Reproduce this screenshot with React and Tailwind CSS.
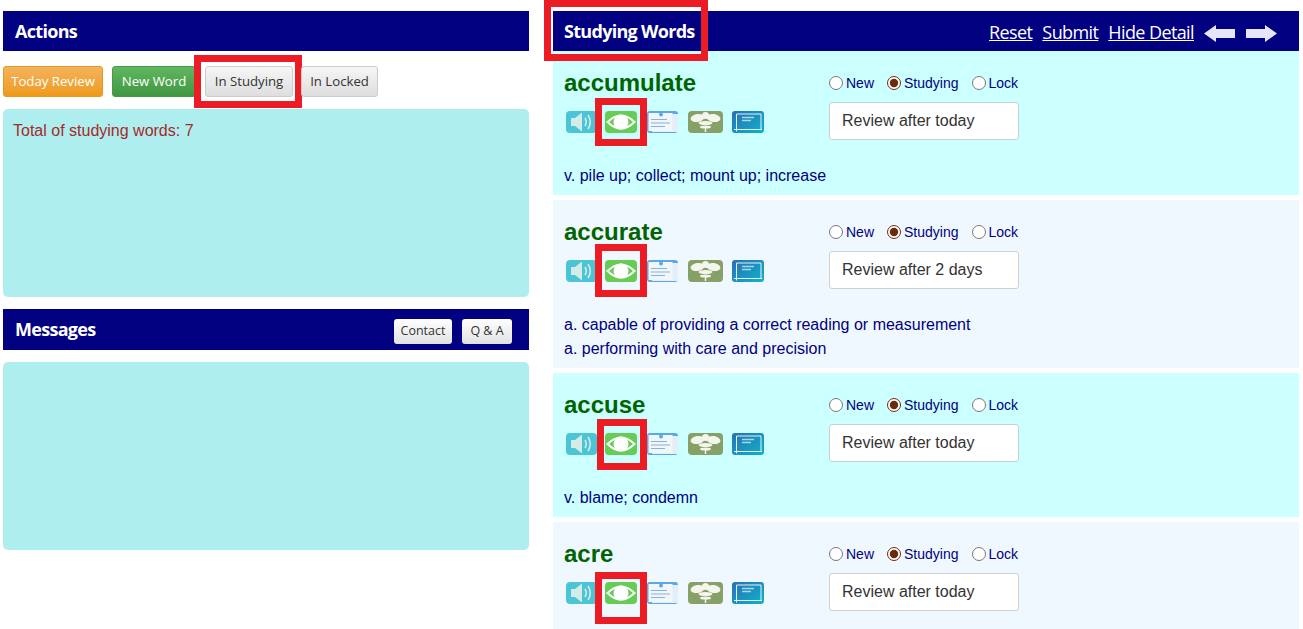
const ui = "font-['Open_Sans','Noto_Sans',sans-serif]";

function Speaker() {
  return (
    <svg width="31" height="22" viewBox="0 0 31 22" className="block">
      <rect width="31" height="22" rx="4" fill="#4bc5d6" />
      <path d="M5 7h4l7-5.500v19L9 15H5z" fill="#d3ece8" />
      <path d="M19 7q2.500 4 0 8M22 4q4.500 7 0 14" fill="none" stroke="#d3ece8" strokeWidth="1.600" />
    </svg>
  );
}
function Eye() {
  return (
    <svg width="32" height="22" viewBox="0 0 32 22" className="block">
      <rect width="32" height="22" rx="4" fill="#66cc55" />
      <path d="M2.500 11Q16-2 29.500 11 16 24 2.500 11z" fill="none" stroke="#fff" strokeWidth="2" />
      <circle cx="16" cy="11" r="7.500" fill="#fff" />
    </svg>
  );
}
function Cards() {
  return (
    <svg width="31" height="22" viewBox="0 0 31 22" className="block">
      <rect width="31" height="22" rx="3" fill="#5ba8e8" />
      <rect x="5" y="3" width="26" height="18" fill="#e4eef8" />
      <rect x="1.500" y="2" width="24" height="18" fill="#f1f6fb" />
      <circle cx="14" cy="3.500" r="2" fill="#5ba8e8" />
      <path d="M4 8.500h16M4 12h19M4 15.500h14" stroke="#86b2dc" strokeWidth="1.200" />
    </svg>
  );
}
function Bee() {
  return (
    <svg width="35" height="22" viewBox="0 0 35 22" className="block">
      <rect width="35" height="22" rx="4" fill="#86a068" />
      <ellipse cx="9.500" cy="7" rx="7" ry="4" fill="#f4f6ee" transform="rotate(-8 9.500 7)" />
      <ellipse cx="25.500" cy="7" rx="7" ry="4" fill="#f4f6ee" transform="rotate(8 25.500 7)" />
      <circle cx="17.500" cy="4.500" r="3.500" fill="#f4f6ee" />
      <ellipse cx="17.500" cy="12" rx="7" ry="2" fill="#f4f6ee" />
      <ellipse cx="17.500" cy="16" rx="5.500" ry="1.500" fill="#f4f6ee" />
      <path d="M17.500 17v4" stroke="#f4f6ee" strokeWidth="1.500" />
    </svg>
  );
}
function Book({ id }) {
  return (
    <svg width="32" height="22" viewBox="0 0 32 22" className="block">
      <defs>
        <linearGradient id={id} x1="0" y1="0" x2="1" y2="1">
          <stop offset="0" stopColor="#2a6fb5" />
          <stop offset="1" stopColor="#0fb3c8" />
        </linearGradient>
      </defs>
      <rect width="32" height="22" rx="3" fill={`url(#${id})`} />
      <path d="M4.500 20.500V3M2 18.500h28M4.500 3H29v15.500" fill="none" stroke="#e2f4f8" strokeWidth="1" />
      <path d="M10 6.500h12M10 9.500h9" stroke="#9fdbe8" strokeWidth="1.500" />
    </svg>
  );
}

function Btn({ className, children, mark }) {
  return (
    <button className={`relative h-[31px] rounded-[3px] border pt-px text-[13.2px] ${ui} ${className}`}>
      {children}
      {mark}
    </button>
  );
}

function Radio({ label, checked, group }) {
  return (
    <label className="flex items-center text-[14px] text-[#000080]">
      <input
        type="radio"
        defaultChecked={checked}
        name={group}
        className="mr-[3px] h-[14px] w-[14px] accent-[#6b2a0c]"
      />
      {label}
    </label>
  );
}

function Card({ word, review, defs, bg, eyeBox }) {
  return (
    <div className={`px-[11px] pt-5 pb-[7px] ${bg}`}>
      <div className="flex">
        <div className="w-[265px]">
          <div className="-mt-px h-[26px] text-[24px] leading-[26px] font-bold text-[#006400]">{word}</div>
          <div className="mt-[15px] flex items-start pl-[2px]">
            <Speaker />
            <div className="relative ml-2">
              <Eye />
              <span className={`absolute border-[7px] border-[#ec1c24] ${eyeBox}`} />
            </div>
            <div className="ml-[10px]"><Cards /></div>
            <div className="ml-[10px]"><Bee /></div>
            <div className="ml-[9px]"><Book id={`book-${word}`} /></div>
          </div>
        </div>
        <div>
          <div className="flex h-6 items-center gap-[13px]">
            <Radio label="New" group={word} />
            <Radio label="Studying" group={word} checked />
            <Radio label="Lock" group={word} />
          </div>
          <div className="mt-[7px] flex h-[38px] w-[190px] items-center rounded-[3px] border border-[#ccd0d5] bg-white pl-3 text-[16px] text-[#333]">
            {review}
          </div>
        </div>
      </div>
      <div className="mt-6 text-[16px] leading-6 text-[#000080]">
        {defs.map((d) => (
          <div key={d}>{d}</div>
        ))}
      </div>
    </div>
  );
}

const HeaderTitle = ({ children }) => (
  <span className={`text-[18px] font-bold text-white ${ui} tracking-[-0.7px]`}>{children}</span>
);

export default function App() {
  return (
    <div className="flex h-[629px] w-[1303px] gap-[24px] overflow-hidden bg-white pt-[11px] pr-1 pl-[3px] font-['Liberation_Sans',Arial,sans-serif]">
      <div className="w-[526px] shrink-0">
        <div className="flex h-10 items-center bg-[#000080] px-3">
          <HeaderTitle>Actions</HeaderTitle>
        </div>
        <div className="mt-[15px] flex gap-[9px]">
          <Btn className="w-[100px] border-[#e39a1f] bg-gradient-to-b from-[#f4b35a] to-[#ee9a17] text-white">Today Review</Btn>
          <Btn className="w-[84px] border-[#459a45] bg-gradient-to-b from-[#5fb75f] to-[#429742] text-white">New Word</Btn>
          <Btn
            className="w-[88px] border-[#ccc] bg-gradient-to-b from-[#f6f6f6] to-[#dedede] text-[#333]"
            mark={<span className="absolute -top-[12px] -right-[10px] -bottom-[12px] -left-[12px] border-[7px] border-[#ec1c24]" />}
          >
            In Studying
          </Btn>
          <Btn className="-ml-[1px] w-[77px] border-[#ccc] bg-gradient-to-b from-[#f6f6f6] to-[#dedede] text-[#333]">In Locked</Btn>
        </div>
        <div className="mt-3 h-[188px] rounded-[5px] bg-[#afeeee] px-[10px] pt-3 text-[16px] leading-5 text-[#a52a2a]">
          Total of studying words: 7
        </div>
        <div className="mt-3 flex h-[41px] items-center justify-between bg-[#000080] pr-[17px] pl-3">
          <HeaderTitle>Messages</HeaderTitle>
          <div className="mb-[6px] flex gap-[10px] self-end">
            <button className={`h-[25px] w-[58px] rounded-[3px] bg-gradient-to-b from-white to-[#e2e2e2] text-[12.500px] text-[#333] ${ui}`}>Contact</button>
            <button className={`h-[25px] w-[50px] rounded-[3px] bg-gradient-to-b from-white to-[#e2e2e2] text-[12.500px] text-[#333] ${ui}`}>Q &amp; A</button>
          </div>
        </div>
        <div className="mt-3 h-[188px] rounded-[5px] bg-[#afeeee]" />
      </div>

      <div className="w-[746px] shrink-0">
        <div className="flex h-10 items-center justify-between bg-[#000080] pr-[22px] pl-[11px]">
          <div className="relative">
            <HeaderTitle>Studying Words</HeaderTitle>
            <span className="absolute -top-[18px] -right-[13px] -bottom-[16px] -left-[20px] border-[7px] border-[#ec1c24]" />
          </div>
          <div className={`flex items-center pt-[2px] text-[18px] tracking-[-0.6px] text-white ${ui}`}>
            <a className="underline">Reset</a>
            <a className="ml-[10px] underline">Submit</a>
            <a className="ml-[10px] underline">Hide Detail</a>
            <svg width="31" height="17" viewBox="0 0 31 17" className="mt-[3px] ml-[10px]">
              <path d="M0 8.500 12 0v4h19v9H12v4z" fill="#e6e6fa" />
            </svg>
            <svg width="31" height="17" viewBox="0 0 31 17" className="mt-[3px] ml-[11px]">
              <path d="M31 8.500 19 0v4H0v9h19v4z" fill="#e6e6fa" />
            </svg>
          </div>
        </div>
        <div className="flex flex-col gap-[5px]">
          <Card
            word="accumulate"
            review="Review after today"
            defs={["v. pile up; collect; mount up; increase"]}
            bg="bg-[#ccffff]"
            eyeBox="-top-[13px] -right-[10px] -bottom-[13px] -left-[10px]"
          />
          <Card
            word="accurate"
            review="Review after 2 days"
            defs={["a. capable of providing a correct reading or measurement", "a. performing with care and precision"]}
            bg="bg-[#f0f8ff]"
            eyeBox="-top-[16px] -right-[10px] -bottom-[15px] -left-[10px]"
          />
          <Card
            word="accuse"
            review="Review after today"
            defs={["v. blame; condemn"]}
            bg="bg-[#ccffff]"
            eyeBox="-top-[14px] -right-[10px] -bottom-[15px] -left-[8px]"
          />
          <Card
            word="acre"
            review="Review after today"
            defs={[]}
            bg="bg-[#f0f8ff]"
            eyeBox="-top-[10px] -right-[10px] -bottom-[20px] -left-[10px]"
          />
        </div>
      </div>
    </div>
  );
}
